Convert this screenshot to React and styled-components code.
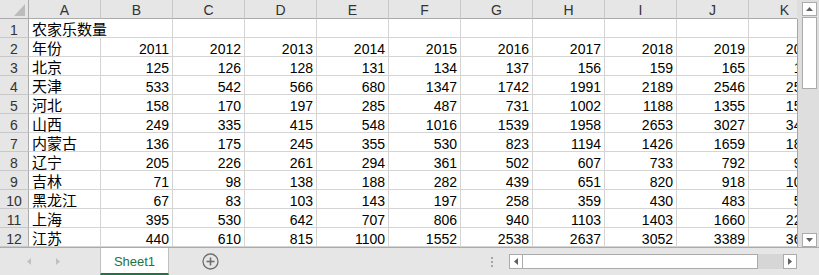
import React from 'react';
import styled, { createGlobalStyle } from 'styled-components';

const GlobalStyle = createGlobalStyle`
  html, body { margin: 0; padding: 0; background: #ffffff; }
  body { font-family: "Liberation Sans", "Noto Sans CJK SC", sans-serif; }
`;

const Window = styled.div`
  width: 819px;
  height: 275px;
  display: flex;
  flex-direction: column;
  overflow: hidden;
  background: #e6e6e6;
`;

const Main = styled.div`
  display: flex;
  height: 247px;
  flex: none;
`;

const Sheet = styled.div`
  width: 797px;
  overflow: hidden;
  background: #ffffff;
  display: grid;
  grid-template-columns: 29px repeat(11, 72px);
  grid-auto-rows: 19px;
  align-content: start;
`;

const BaseCell = styled.div`
  box-sizing: border-box;
  display: flex;
  align-items: flex-end;
  font-size: 14px;
  line-height: 14px;
  white-space: nowrap;
`;

const Corner = styled(BaseCell)`
  background: #e6e6e6;
  border-right: 1px solid #ababab;
  border-bottom: 1px solid #ababab;
  justify-content: flex-end;
  padding: 0 3px 2px 0;
`;

const ColHead = styled(BaseCell)`
  background: #e6e6e6;
  border-right: 1px solid #c8c8c8;
  border-bottom: 1px solid #ababab;
  justify-content: center;
  color: #333333;
  padding-bottom: 1px;
`;

const RowHead = styled(BaseCell)`
  background: #e6e6e6;
  border-right: 1px solid #ababab;
  border-bottom: 1px solid #c8c8c8;
  justify-content: center;
  color: #333333;
`;

const Cell = styled(BaseCell)`
  border-right: 1px solid ${(p) => (p.$spill ? 'transparent' : '#d4d4d4')};
  border-bottom: 1px solid #d4d4d4;
  justify-content: ${(p) => (p.$num ? 'flex-end' : 'flex-start')};
  padding: 0 3px;
  color: #000000;
  font-size: ${(p) => (p.$num ? '14px' : '15px')};
  position: relative;
  z-index: ${(p) => (p.$spill ? 1 : 0)};
`;

const VScroll = styled.div`
  position: relative;
  width: 22px;
  box-sizing: border-box;
  padding: 2px 2px 0 5px;
  display: flex;
  flex-direction: column;
  background: #dedede;
  &::before {
    content: '';
    position: absolute;
    left: 0;
    top: 19px;
    bottom: 0;
    width: 1px;
    background: #a6a6a6;
  }
`;

const ScrollButton = styled.div`
  box-sizing: border-box;
  width: ${(p) => (p.$w ? `${p.$w}px` : '15px')};
  height: ${(p) => (p.$h ? `${p.$h}px` : '14px')};
  background: #ffffff;
  border: 1px solid #ababab;
  display: flex;
  align-items: center;
  justify-content: center;
  flex: none;
  margin-top: ${(p) => (p.$end ? 'auto' : '0')};
`;

const VThumb = styled.div`
  box-sizing: border-box;
  width: 15px;
  height: 72px;
  margin-top: 1px;
  background: #ffffff;
  border: 1px solid #ababab;
`;

const BottomBar = styled.div`
  flex: none;
  height: 28px;
  box-sizing: border-box;
  border-top: 1px solid #ababab;
  display: flex;
  align-items: stretch;
  padding-right: 22px;
  background: #e6e6e6;
`;

const Nav = styled.div`
  width: 100px;
  display: flex;
  align-items: center;
  padding-left: 27px;
  gap: 25px;
  box-sizing: border-box;
`;

const Tab = styled.div`
  box-sizing: border-box;
  width: 69px;
  height: 27px;
  background: #ffffff;
  border-left: 1px solid #c0c0c0;
  border-right: 1px solid #c0c0c0;
  border-bottom: 2px solid #217346;
  color: #217346;
  font-size: 13px;
  display: flex;
  align-items: center;
  justify-content: center;
  padding-top: 1px;
`;

const AddButton = styled.div`
  margin-left: 33px;
  display: flex;
  align-items: center;
`;

const Splitter = styled.div`
  margin-left: auto;
  margin-right: 15px;
  width: 3px;
  display: flex;
  flex-direction: column;
  justify-content: center;
  gap: 2px;
  & > span {
    width: 2px;
    height: 2px;
    background: #a6a6a6;
  }
`;

const HScroll = styled.div`
  display: flex;
  align-items: center;
  width: 288px;
  align-self: center;
  height: 15px;
`;

const HThumb = styled.div`
  box-sizing: border-box;
  width: 235px;
  height: 15px;
  background: #ffffff;
  border: 1px solid #ababab;
  border-left: none;
`;

const HTrack = styled.div`
  width: 25px;
  height: 15px;
  background: #d6d6d6;
`;

const Tri = ({ dir, color = '#606060', w = 4, h = 7 }) => {
  const pts = {
    left: `${w},0 ${w},${h} 0,${h / 2}`,
    right: `0,0 0,${h} ${w},${h / 2}`,
    up: `0,${w} ${h},${w} ${h / 2},0`,
    down: `0,0 ${h},0 ${h / 2},${w}`,
  }[dir];
  const vw = dir === 'up' || dir === 'down' ? h : w;
  const vh = dir === 'up' || dir === 'down' ? w : h;
  return (
    <svg width={vw} height={vh} viewBox={`0 0 ${vw} ${vh}`}>
      <polygon points={pts} fill={color} />
    </svg>
  );
};

const cols = ['A', 'B', 'C', 'D', 'E', 'F', 'G', 'H', 'I', 'J', 'K'];

const rows = [
  ['农家乐数量'],
  ['年份', 2011, 2012, 2013, 2014, 2015, 2016, 2017, 2018, 2019, 2020],
  ['北京', 125, 126, 128, 131, 134, 137, 156, 159, 165, 178],
  ['天津', 533, 542, 566, 680, 1347, 1742, 1991, 2189, 2546, 2581],
  ['河北', 158, 170, 197, 285, 487, 731, 1002, 1188, 1355, 1512],
  ['山西', 249, 335, 415, 548, 1016, 1539, 1958, 2653, 3027, 3418],
  ['内蒙古', 136, 175, 245, 355, 530, 823, 1194, 1426, 1659, 1832],
  ['辽宁', 205, 226, 261, 294, 361, 502, 607, 733, 792, 915],
  ['吉林', 71, 98, 138, 188, 282, 439, 651, 820, 918, 1027],
  ['黑龙江', 67, 83, 103, 143, 197, 258, 359, 430, 483, 541],
  ['上海', 395, 530, 642, 707, 806, 940, 1103, 1403, 1660, 2236],
  ['江苏', 440, 610, 815, 1100, 1552, 2538, 2637, 3052, 3389, 3647],
];

export default function App() {
  return (
    <>
      <GlobalStyle />
      <Window>
        <Main>
          <Sheet>
            <Corner>
              <svg width="11" height="12" viewBox="0 0 11 12">
                <polygon points="11,0 11,12 0,12" fill="#bcbcbc" />
              </svg>
            </Corner>
            {cols.map((c) => (
              <ColHead key={c}>{c}</ColHead>
            ))}
            {rows.map((r, ri) => (
              <React.Fragment key={ri}>
                <RowHead>{ri + 1}</RowHead>
                {cols.map((c, ci) => {
                  const v = r[ci];
                  const isNum = typeof v === 'number';
                  const spill = ri === 0 && ci === 0;
                  return (
                    <Cell key={c} $num={isNum} $spill={spill}>
                      {v ?? ''}
                    </Cell>
                  );
                })}
              </React.Fragment>
            ))}
          </Sheet>
          <VScroll>
            <ScrollButton>
              <Tri dir="up" w={4} h={7} />
            </ScrollButton>
            <VThumb />
            <ScrollButton $end>
              <Tri dir="down" w={4} h={7} />
            </ScrollButton>
          </VScroll>
        </Main>
        <BottomBar>
          <Nav>
            <Tri dir="left" color="#c0c0c0" w={4} h={7} />
            <Tri dir="right" color="#c0c0c0" w={4} h={7} />
          </Nav>
          <Tab>Sheet1</Tab>
          <AddButton>
            <svg width="17" height="17" viewBox="0 0 17 17">
              <circle cx="8.5" cy="8.5" r="7.5" fill="none" stroke="#6e6e6e" strokeWidth="1.3" />
              <line x1="8.5" y1="4.5" x2="8.5" y2="12.5" stroke="#6e6e6e" strokeWidth="1.6" />
              <line x1="4.5" y1="8.5" x2="12.5" y2="8.5" stroke="#6e6e6e" strokeWidth="1.6" />
            </svg>
          </AddButton>
          <Splitter>
            <span />
            <span />
            <span />
          </Splitter>
          <HScroll>
            <ScrollButton $w={14} $h={15}>
              <Tri dir="left" w={4} h={7} />
            </ScrollButton>
            <HThumb />
            <HTrack />
            <ScrollButton $w={14} $h={15}>
              <Tri dir="right" w={4} h={7} />
            </ScrollButton>
          </HScroll>
        </BottomBar>
      </Window>
    </>
  );
}
